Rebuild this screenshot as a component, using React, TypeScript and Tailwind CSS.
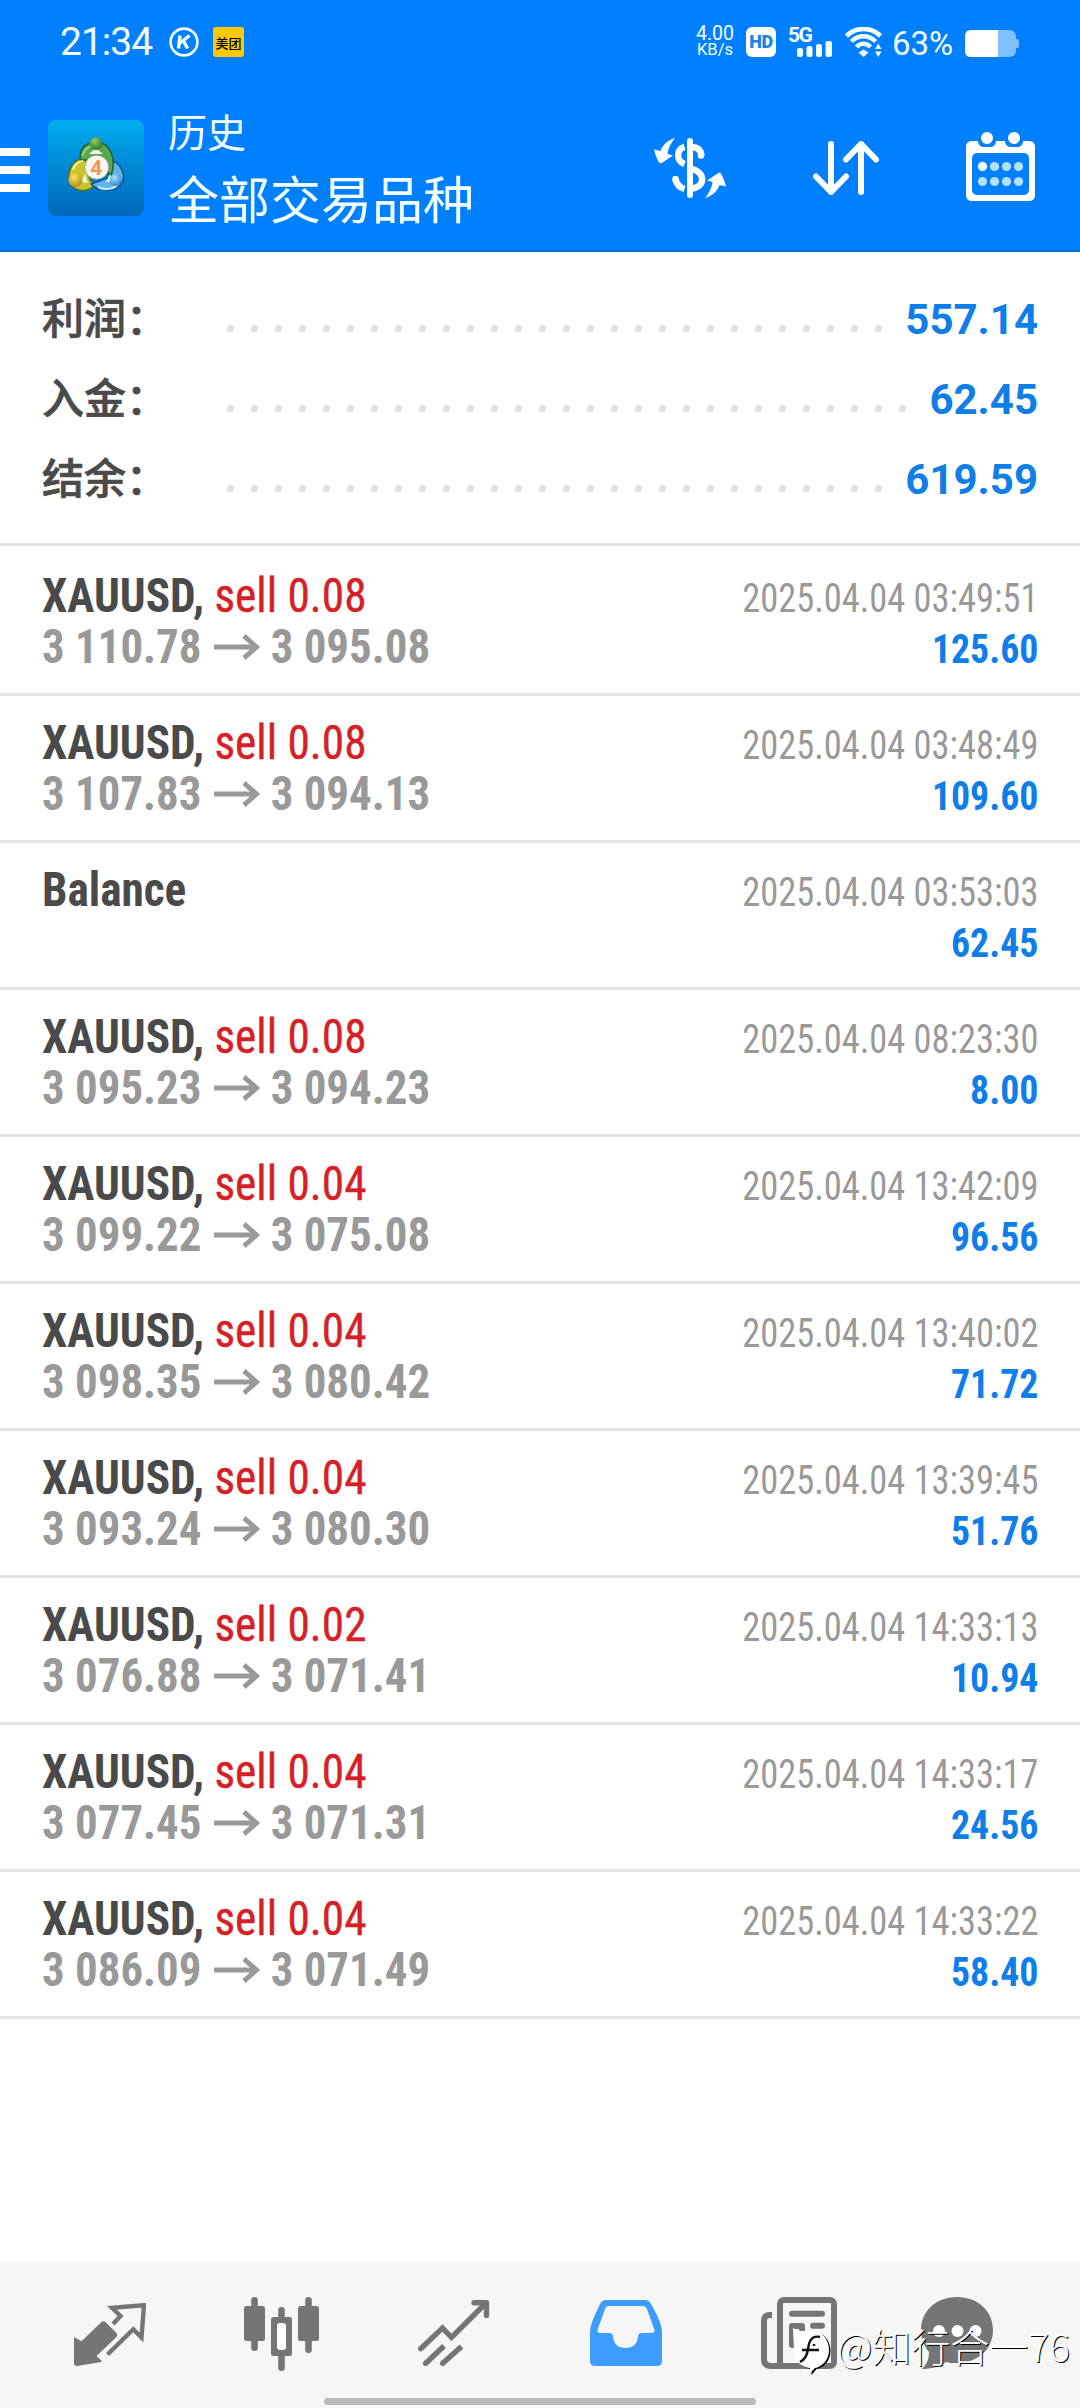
import type { ReactNode } from "react";

type Deal = {
  symbol: string;
  side?: string;
  open?: string;
  close?: string;
  time: string;
  profit: string;
};

const summary = [
  { label: "利润", value: "557.14" },
  { label: "入金", value: "62.45" },
  { label: "结余", value: "619.59" },
];

const deals: Deal[] = [
  { symbol: "XAUUSD,", side: "sell 0.08", open: "3 110.78", close: "3 095.08", time: "2025.04.04 03:49:51", profit: "125.60" },
  { symbol: "XAUUSD,", side: "sell 0.08", open: "3 107.83", close: "3 094.13", time: "2025.04.04 03:48:49", profit: "109.60" },
  { symbol: "Balance", time: "2025.04.04 03:53:03", profit: "62.45" },
  { symbol: "XAUUSD,", side: "sell 0.08", open: "3 095.23", close: "3 094.23", time: "2025.04.04 08:23:30", profit: "8.00" },
  { symbol: "XAUUSD,", side: "sell 0.04", open: "3 099.22", close: "3 075.08", time: "2025.04.04 13:42:09", profit: "96.56" },
  { symbol: "XAUUSD,", side: "sell 0.04", open: "3 098.35", close: "3 080.42", time: "2025.04.04 13:40:02", profit: "71.72" },
  { symbol: "XAUUSD,", side: "sell 0.04", open: "3 093.24", close: "3 080.30", time: "2025.04.04 13:39:45", profit: "51.76" },
  { symbol: "XAUUSD,", side: "sell 0.02", open: "3 076.88", close: "3 071.41", time: "2025.04.04 14:33:13", profit: "10.94" },
  { symbol: "XAUUSD,", side: "sell 0.04", open: "3 077.45", close: "3 071.31", time: "2025.04.04 14:33:17", profit: "24.56" },
  { symbol: "XAUUSD,", side: "sell 0.04", open: "3 086.09", close: "3 071.49", time: "2025.04.04 14:33:22", profit: "58.40" },
];

function StatusBar() {
  return (
    <div className="flex h-[84px] items-center pr-[61px] pl-[60px] font-[Roboto,sans-serif] text-[#f4ffff]">
      <span className="w-[109px] text-[39px] leading-none tracking-[-1px]">21:34</span>
      <svg width="30" height="30" viewBox="0 0 30 30" fill="none" stroke="currentColor">
        <circle cx="15" cy="15" r="13.4" strokeWidth="2.6" />
        <path d="M11 8.5 9.5 21.5M20.5 8.5 11 16M14.5 14 18.5 21.5" strokeWidth="3.4" />
      </svg>
      <span className="ml-[14px] flex h-[30px] w-[31px] items-center justify-center rounded-[3px] bg-[#ffc800] font-['Noto_Sans_CJK_SC',sans-serif] text-[13px] leading-none font-medium text-black">
        美团
      </span>

      <div className="ml-auto flex items-center">
        <div className="flex w-[42px] flex-col items-center text-[19.5px] leading-[16px]">
          <span>4.00</span>
          <span className="text-[16.5px]">KB/s</span>
        </div>
        <span className="ml-[10px] flex h-[30px] w-[30px] items-center justify-center rounded-[6px] bg-white text-[18px] leading-none font-black tracking-[-0.5px] text-[#1583e8]">
          HD
        </span>
        <div className="relative ml-[12px] h-[30px] w-[44px]">
          <span className="absolute top-0 left-0 text-[21px] leading-[16px] font-bold tracking-[-1.5px]">5G</span>
          <svg className="absolute inset-0" width="44" height="30" viewBox="0 0 44 30" fill="currentColor">
            <rect x="9" y="21" width="6" height="9" rx="2.2" />
            <rect x="18.5" y="19" width="6" height="11" rx="2.2" />
            <rect x="28" y="17" width="6" height="13" rx="2.2" />
            <rect x="37.5" y="14" width="6.5" height="16" rx="2.2" />
          </svg>
        </div>
        <svg className="ml-[13px]" width="38" height="30" viewBox="0 0 38 30" fill="none" stroke="currentColor">
          <path d="M1.5 9C11 -0.5 26 -0.5 35.5 9" strokeWidth="4.6" />
          <path d="M6.5 14.5C13 7.5 24 7.5 30.5 14.5" strokeWidth="4.4" />
          <path d="M11.5 20C15.5 15.5 21.5 15.5 25.5 20" strokeWidth="4.4" />
          <path d="M13.5 25.5 18.5 22.5 23.5 25.5 18.5 30Z" fill="currentColor" stroke="none" />
          <path d="M30 22 33.2 16.5 36.5 22ZM30 24.5 33.2 30 36.5 24.5Z" fill="currentColor" stroke="none" />
        </svg>
        <span className="mt-[2px] ml-[9px] w-[64px] text-[33px] leading-none">63%</span>
        <svg className="mt-[3px] ml-[9px]" width="54" height="27" viewBox="0 0 54 27">
          <path d="M33 0H44Q51 0 51 7V9H52Q54 9 54 11V16Q54 18 52 18H51V20Q51 27 44 27H33Z" fill="#80c0ff" />
          <path d="M6 0H33V27H6Q0 27 0 21V6Q0 0 6 0Z" fill="#fff" />
        </svg>
      </div>
    </div>
  );
}

function AppLogo() {
  return (
    <svg width="96" height="96" viewBox="0 0 96 96">
      <defs>
        <linearGradient id="bg" x1="0" y1="0" x2="0" y2="1">
          <stop offset="0" stopColor="#02aef0" />
          <stop offset="0.55" stopColor="#0084d0" />
          <stop offset="1" stopColor="#0068be" />
        </linearGradient>
        <radialGradient id="green" cx="0.4" cy="0.3" r="0.8">
          <stop offset="0" stopColor="#8fd06c" />
          <stop offset="1" stopColor="#1a6a2c" />
        </radialGradient>
        <radialGradient id="gold" cx="0.4" cy="0.3" r="0.8">
          <stop offset="0" stopColor="#ffe45c" />
          <stop offset="1" stopColor="#a98010" />
        </radialGradient>
        <radialGradient id="sky" cx="0.4" cy="0.3" r="0.8">
          <stop offset="0" stopColor="#b5e4ff" />
          <stop offset="1" stopColor="#1678c8" />
        </radialGradient>
      </defs>
      <rect width="96" height="96" rx="8" fill="url(#bg)" />
      <path d="M47 65C39 73 27 72 22 63C18 51 25 39 37 38L42 60Z" fill="#c9c62c" stroke="#5c6d18" strokeWidth="1.5" />
      <path d="M60 40C73 41 79 56 73 64C66 74 50 71 43 64L60 58Z" fill="#63b4ec" stroke="#0c5296" strokeWidth="1.5" />
      <path d="M32 40C31 25 42 22 50 22C62 24 69 38 63 56L52 40Z" fill="#55a84e" stroke="#1c642b" strokeWidth="1.5" />
      <path d="M35 36C36 27 44 25 50 26" fill="none" stroke="#a0dc90" strokeWidth="1.5" />
      <path d="M25 50C26 45 30 41 35 41" fill="none" stroke="#f6f39a" strokeWidth="2" />
      <path d="M50 67C58 71 68 69 71 62" fill="none" stroke="#c9ecff" strokeWidth="2" />
      <path d="M41 34H55L48 28ZM33 62 40 63 37 54ZM58 62 65 62 62 54Z" fill="#eaf6e2" />
      <circle cx="48" cy="23.5" r="6.5" fill="url(#green)" />
      <circle cx="27.5" cy="60" r="7" fill="url(#gold)" />
      <circle cx="67.5" cy="60" r="6" fill="url(#sky)" />
      <circle cx="48.7" cy="47.3" r="12" fill="#fbf6f2" stroke="#8d9b8c" strokeWidth="0.8" />
      <text x="48.2" y="54.8" textAnchor="middle" className="font-[Roboto,sans-serif] text-[21px] font-bold" fill="#f19a4e">
        4
      </text>
    </svg>
  );
}

function CurrencyIcon() {
  const arrow = "M21 0C13 2 8 8 6.5 13L0 11.5C1 16 3 21 5 24.5Q6.5 26 8.5 24.5L19 17.5L13.5 16C14.5 9 17 5 21 0Z";
  return (
    <svg width="72" height="60" viewBox="0 0 72 60" fill="none" stroke="#fff" strokeWidth="6.5">
      <path d="M36 3V57" strokeWidth="6" strokeLinecap="round" />
      <path d="M30.5 8.8C22 11 22 22.5 30.5 26" />
      <path d="M38 9C43 9.5 47 12 47.5 17" />
      <path d="M47 16.5V17.5M21.5 41V41.5" strokeLinecap="round" />
      <path d="M38 31C51.5 34 51.5 49 38 50.5" />
      <path d="M21.5 41C22.5 46 25.5 49.5 30.5 51" />
      <path d={arrow} fill="#fff" stroke="none" />
      <path d={arrow} fill="#fff" stroke="none" transform="rotate(180 36 30)" />
    </svg>
  );
}

function SortIcon() {
  return (
    <svg width="66" height="54" viewBox="0 0 66 54" fill="none" stroke="#fff" strokeWidth="6" strokeLinecap="round" strokeLinejoin="round">
      <path d="M18 3V51M3 35.5 18 51 33 35.5M48 51V3M33 18.5 48 3 63 18.5" />
    </svg>
  );
}

function CalendarIcon() {
  return (
    <svg width="69" height="69" viewBox="0 0 69 69">
      <rect y="9" width="69" height="60" rx="5.5" fill="#fff" />
      <rect x="6" y="21" width="57" height="42" rx="5" fill="#0080ff" />
      <path d="M12 5H30V10Q29 15 24 15H18Q13 15 12 10ZM39 5H57V10Q56 15 51 15H45Q40 15 39 10Z" fill="#0080ff" />
      <circle cx="21" cy="6" r="6" fill="#fff" />
      <circle cx="48" cy="6" r="6" fill="#fff" />
      <circle cx="16.5" cy="34.5" r="4.7" fill="#eefaff" />
      {[28.5, 40.5, 52.5].map((x) => (
        <circle key={x} cx={x} cy="34.5" r="4.6" fill="#b3e0ff" />
      ))}
      {[16.5, 28.5, 40.5, 52.5].map((x) => (
        <circle key={x} cx={x} cy="49.5" r="4.6" fill="#b3e0ff" />
      ))}
    </svg>
  );
}

function Header() {
  return (
    <header className="h-[252px] border-b-2 border-[#0a6fdc] bg-[#0080ff]">
      <StatusBar />
      <div className="flex h-[166px] pr-[45px]">
        <div className="mt-[64px] flex w-[30px] flex-col gap-[10px]">
          <div className="h-2 bg-white" />
          <div className="h-2 bg-white" />
          <div className="h-2 bg-white" />
        </div>
        <div className="mt-9 ml-[18px]">
          <AppLogo />
        </div>
        <div className="mt-[22px] ml-[24px] flex flex-col font-['Noto_Sans_CJK_SC',sans-serif] text-[#f4ffff]">
          <span className="text-[39px] leading-[48px]">历史</span>
          <span className="mt-[13px] text-[51px] leading-[60px]">全部交易品种</span>
        </div>
        <div className="ml-auto flex">
          <div className="mt-[54px]">
            <CurrencyIcon />
          </div>
          <div className="mt-[57px] ml-[87px]">
            <SortIcon />
          </div>
          <div className="mt-[48px] ml-[87px]">
            <CalendarIcon />
          </div>
        </div>
      </div>
    </header>
  );
}

function SummaryRow({ label, value }: { label: string; value: string }) {
  return (
    <div className="flex h-20 items-center">
      <span className="mb-[7px] w-[176px] shrink-0 font-['Noto_Sans_CJK_SC',sans-serif] text-[42px] leading-none font-medium whitespace-nowrap text-[#4a4a4a] [-webkit-text-stroke:0.7px_#4a4a4a]">
        {label}：
      </span>
      {/* leader dots: wrapped ones are clipped, so no dot is cut in half */}
      <div className="mt-[19px] flex h-[8px] flex-1 flex-wrap overflow-hidden">
        {Array.from({ length: 36 }, (_, i) => (
          <span key={i} className="flex h-[8px] w-6 items-center justify-center">
            <span className="h-[7px] w-[7px] rounded-full bg-[#e0e0e0]" />
          </span>
        ))}
      </div>
      <span className="mt-[2px] font-[Roboto,sans-serif] text-[42px] leading-none font-bold text-[#0f7ee8]">{value}</span>
    </div>
  );
}

function PriceArrow() {
  return (
    <svg className="mr-[12px] ml-[13px]" width="49" height="26" viewBox="0 0 49 26" fill="none" stroke="#999" strokeWidth="5">
      <path d="M0 13H45M32 2 45.5 13 32 24" />
    </svg>
  );
}

function DealRow({ deal }: { deal: Deal }) {
  return (
    <div className="flex h-[147px] justify-between border-b-[3px] border-[#e3e3e3] px-[42px] pt-[21px] font-['Roboto_Condensed',sans-serif]">
      <div className="text-[48px] leading-[51px] whitespace-nowrap">
        <div className="origin-left scale-x-[0.943] font-bold text-[#4a4a4a]">
          {deal.symbol}{" "}
          {deal.side && <span className="font-normal text-[#d61f26] [-webkit-text-stroke:0.4px_#d61f26]">{deal.side}</span>}
        </div>
        {deal.open && (
          <div className="flex origin-left scale-x-[0.935] items-center font-bold text-[#999]">
            {deal.open}
            <PriceArrow />
            {deal.close}
          </div>
        )}
      </div>
      <div className="pt-[3px] text-right text-[40px] leading-[51px]">
        <div className="origin-right scale-x-[0.91] text-[#999]">{deal.time}</div>
        <div className="origin-right scale-x-[0.945] font-bold text-[#0f7ee8]">{deal.profit}</div>
      </div>
    </div>
  );
}

function NavSlot({ children, className }: { children: ReactNode; className: string }) {
  return <div className={className}>{children}</div>;
}

function BottomNav() {
  return (
    <nav className="relative h-[146px] bg-[#f6f6f6]">
      <div className="flex items-start pl-[74px]">
        <NavSlot className="mt-[41px]">
          <svg width="72" height="64" viewBox="0 0 72 64">
            <path d="M0 34 7.5 38.3 27.5 19Q29.5 17.5 31.5 19L42.5 30Q44 32 42.5 34L22.5 53 27.5 57.5V59L3 63Q0 63 0 60Z" fill="#757575" />
            <path d="M39 21 46.5 13 38 4.8 70 2.2 67.5 34.5 59.3 26.3 33.5 51.5" fill="none" stroke="#757575" strokeWidth="4.4" />
          </svg>
        </NavSlot>
        <NavSlot className="mt-[35px] ml-[98px]">
          <svg width="75" height="75" viewBox="0 0 75 75" fill="#757575">
            <rect x="0" y="9" width="21" height="35" rx="2.5" />
            <rect x="7.2" y="0" width="6.6" height="54" rx="3.2" />
            <rect x="54" y="9" width="21" height="35" rx="2.5" />
            <rect x="61.2" y="0" width="6.6" height="56" rx="3.2" />
            <rect x="34.2" y="10" width="6.6" height="64" rx="3.2" />
            <rect x="27" y="20" width="21" height="39" rx="2.5" />
            <rect x="33" y="26" width="9" height="27" rx="3" fill="#fff" />
          </svg>
        </NavSlot>
        <NavSlot className="mt-[38px] ml-[99px]">
          <svg width="72" height="66" viewBox="0 0 72 66" fill="none" stroke="#757575" strokeWidth="5.4" strokeLinecap="round">
            <path d="M2.7 48.7 24.5 28 33.5 37.5 67 4" />
            <path d="M56 2.7H68.5V15.5" strokeLinejoin="round" />
            <path d="M7.6 63.3 8 63M24.7 63.3 25 63" />
            <path d="M8 63 26 46M25 63 43.5 46.5" strokeLinecap="butt" />
          </svg>
        </NavSlot>
        <NavSlot className="mt-[38px] ml-[99px]">
          <svg width="73" height="66" viewBox="0 0 73 66">
            <path
              fillRule="evenodd"
              fill="#3d9dfc"
              d="M17 0H56Q60 0 62 4C67 13 73 23 73 33V61Q73 66 68 66H6Q1 66 1 61V33C1 23 7 13 11 4Q13 0 17 0ZM20 6Q17 6 16 9L8.5 30Q8 33 11 33H20Q24 33 24 37Q25.5 48 36.5 48Q47.5 48 49 37Q49 33 53 33H62Q66 33 65.5 30L58 9Q56.5 6 54 6Z"
            />
          </svg>
        </NavSlot>
        <NavSlot className="mt-[35px] ml-[99px]">
          <svg width="76" height="72" viewBox="0 0 76 72" fill="none" stroke="#757575" strokeWidth="6">
            <path d="M11 18H9Q3 18 3 24V62Q3 69 10 69H22" />
            <rect x="19" y="3" width="54" height="66" rx="4" />
            <path d="M31 16.7H61M52 28.7H61" strokeLinecap="round" />
            <path d="M31 48V29H41V48Z" strokeLinejoin="round" />
          </svg>
        </NavSlot>
        <NavSlot className="mt-[35px] ml-[84px]">
          <svg width="72" height="73" viewBox="0 0 72 73">
            <path d="M36 0C57 0 72 14 72 33C72 53 56 66 36 66C31 66 28 66 25 65C18 70 10 72 1 72C6 67 8 62 8 55C3 49 0 42 0 33C0 14 15 0 36 0Z" fill="#757575" />
            <circle cx="18" cy="34" r="6" fill="#fff" />
            <circle cx="36.5" cy="34" r="6" fill="#fff" />
            <circle cx="54.5" cy="34" r="6" fill="#fff" />
          </svg>
        </NavSlot>
      </div>

      <div className="absolute top-[136px] left-[324px] h-[7px] w-[432px] rounded-full bg-[#bababa]" />

      {/* author mark over the last two tabs */}
      <div className="absolute top-[53px] right-[10px] flex items-center">
        <svg className="mt-[10px] mr-[5px]" width="42" height="50" viewBox="0 0 42 50">
          <path d="M3 3C10 7 14 6 21 6C32 6 39 14 39 25C39 36 31 42 25 43L20 49V43C11 42 4 36 4 25Z" fill="#000" transform="translate(1.5 1)" />
          <path d="M3 3C10 7 14 6 21 6C32 6 39 14 39 25C39 36 31 42 25 43L20 48V43C11 42 4 36 4 25Z" fill="#fff" />
          <path d="M30 12C21 10 19 17 18 24C17 31 15 34 10 37M12 25H29M24 19V21" fill="none" stroke="#111" strokeWidth="2.4" />
        </svg>
        <span className="font-['Noto_Sans_CJK_SC',sans-serif] text-[39px] leading-[50px] font-light whitespace-nowrap text-white [text-shadow:1px_1px_0_#000]">
          @知行合一76
        </span>
      </div>
    </nav>
  );
}

export default function App() {
  return (
    <div className="flex h-[2408px] w-[1080px] flex-col overflow-hidden bg-white">
      <Header />
      <section className="h-[294px] border-b-[3px] border-[#e3e3e3] px-[42px] pt-[27px]">
        {summary.map((row) => (
          <SummaryRow key={row.label} label={row.label} value={row.value} />
        ))}
      </section>
      <main className="flex-1 pt-[3px]">
        {deals.map((deal) => (
          <DealRow key={deal.time} deal={deal} />
        ))}
      </main>
      <BottomNav />
    </div>
  );
}
